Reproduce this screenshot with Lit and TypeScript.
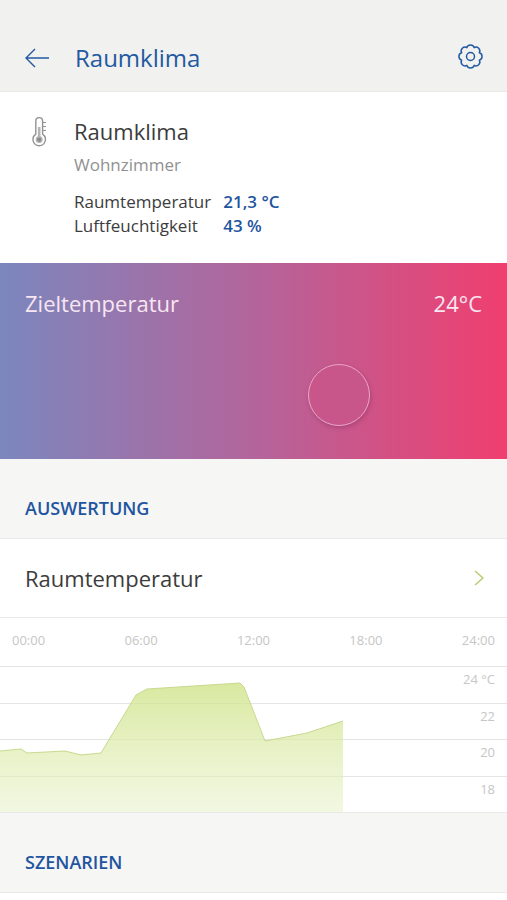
import { LitElement, html, css, svg } from "lit";
import { customElement, property, state } from "lit/decorators.js";

type Point = [number, number];

@customElement("temperature-chart")
class TemperatureChart extends LitElement {
  @property({ attribute: false }) hours: string[] = [];
  @property({ attribute: false }) levels: string[] = [];
  @property({ attribute: false }) points: Point[] = [];

  static styles = css`
    :host {
      display: block;
      font-size: 13px;
      line-height: 16px;
      color: #c6c6c6;
    }
    .hours {
      display: flex;
      justify-content: space-between;
      align-items: center;
      height: 48px;
      padding: 0 12px;
      box-sizing: border-box;
    }
    .hours span {
      padding-bottom: 4px;
    }
    .plot {
      position: relative;
      display: grid;
      grid-template-rows: repeat(4, 1fr);
      height: 146px;
    }
    .level {
      border-top: 1px solid #e4e4e4;
      padding: 4px 12px 0;
      text-align: right;
    }
    .area {
      position: absolute;
      inset: 0;
      width: 100%;
      height: 100%;
    }
  `;

  render() {
    const line = this.points.map((p) => p.join(" ")).join(" L");
    const last = this.points[this.points.length - 1];
    return html`
      <div class="hours">${this.hours.map((h) => html`<span>${h}</span>`)}</div>
      <div class="plot">
        ${this.levels.map((l) => html`<div class="level">${l}</div>`)}
        <svg class="area" viewBox="0 0 507 146" preserveAspectRatio="none" aria-hidden="true">
          <defs>
            <linearGradient id="fill" x1="0" y1="0" x2="0" y2="1">
              <stop offset="0" stop-color="#d0e48a" stop-opacity="0.82" />
              <stop offset="1" stop-color="#e6f0c4" stop-opacity="0.5" />
            </linearGradient>
          </defs>
          ${svg`
            <path d="M${line} L${last[0]} 146 L0 146 Z" fill="url(#fill)" />
            <path d="M${line}" fill="none" stroke="#c8d98f" stroke-width="1" vector-effect="non-scaling-stroke" />
          `}
        </svg>
      </div>
    `;
  }
}

@customElement("app-root")
class AppRoot extends LitElement {
  @state() private target = 24;

  private points: Point[] = [
    [0, 85], [21, 83], [27, 87], [65, 85], [81, 89], [101, 87], [136, 29],
    [147, 23], [240, 17], [244, 21], [265, 75], [307, 67], [343, 55],
  ];

  static styles = css`
    :host {
      display: block;
      min-height: 100vh;
      background: #fff;
      color: #3c3c3c;
      font-family: "Open Sans", "Noto Sans", sans-serif;
      font-size: 17px;
      line-height: 24px;
    }
    h1, h2, h3, p, dl, dd {
      margin: 0;
      font-weight: 400;
    }
    svg {
      display: block;
    }
    button {
      padding: 0;
      border: 0;
      background: none;
      font: inherit;
      color: inherit;
      text-align: left;
      cursor: pointer;
    }
    .bar {
      display: grid;
      grid-template-columns: 50px 1fr auto;
      align-items: center;
      padding: 40px 24px 15px 25px;
      background: #f1f1ef;
      border-bottom: 1px solid #e9e9e7;
      color: #2359a2;
    }
    .bar h1 {
      font-size: 24px;
      line-height: 36px;
    }
    .gear {
      padding-bottom: 4px;
    }
    .info {
      display: grid;
      grid-template-columns: 49px 1fr;
      padding: 22px 25px 25px;
    }
    .info h2 {
      font-size: 22px;
      line-height: 34px;
    }
    .room {
      line-height: 34px;
      color: #919191;
    }
    .values {
      display: grid;
      grid-template-columns: auto 1fr;
      column-gap: 12px;
      padding: 8px 0 0;
    }
    .values dd {
      font-weight: 600;
      color: #1f55a0;
    }
    .target {
      height: 196px;
      box-sizing: border-box;
      padding-top: 24px;
      background: linear-gradient(90deg, #7b87be, #b3659b 50%, #f03e6f);
      color: #f8e6f1;
      font-size: 22px;
      line-height: 32px;
    }
    .caption {
      display: flex;
      justify-content: space-between;
      padding: 0 25px 45px;
    }
    .slider {
      appearance: none;
      display: block;
      width: 100%;
      height: 62px;
      margin: 0;
      background: transparent;
      cursor: pointer;
    }
    .slider::-webkit-slider-thumb {
      appearance: none;
      box-sizing: border-box;
      width: 62px;
      height: 62px;
      border: 1px solid #eaa6c8;
      border-radius: 50%;
      background: #c9568b;
      box-shadow: 1px 2px 4px rgba(90, 20, 70, 0.25);
    }
    .section {
      padding: 37px 25px 18px;
      background: #f6f6f5;
      border-bottom: 1px solid #e9e9e9;
      color: #1f55a0;
      font-size: 18px;
      font-weight: 600;
      line-height: 24px;
    }
    .row {
      display: flex;
      justify-content: space-between;
      align-items: center;
      width: 100%;
      height: 79px;
      padding: 0 23px 0 25px;
      border-bottom: 1px solid #e9e9e9;
      font-size: 22px;
    }
    .evaluation + .section {
      border-top: 1px solid #e9e9e9;
    }
  `;

  private onInput(e: Event) {
    this.target = Number((e.target as HTMLInputElement).value);
  }

  render() {
    return html`
      <header class="bar">
        <button aria-label="Zurück">
          <svg width="24" height="20" viewBox="0 0 24 20" fill="none" stroke="currentColor" stroke-width="1.4">
            <path d="M10 1 L1 10 L10 19 M1 10 H24" />
          </svg>
        </button>
        <h1>Raumklima</h1>
        <button class="gear" aria-label="Einstellungen">
          <svg width="25" height="25" viewBox="-12.5 -12.5 25 25" fill="none" stroke="currentColor" stroke-width="1.5" stroke-linejoin="round">
            <path d="M8.87 -3.67 A3.85 3.85 0 0 1 8.87 3.67 A3.85 3.85 0 0 1 3.67 8.87 A3.85 3.85 0 0 1 -3.67 8.87 A3.85 3.85 0 0 1 -8.87 3.67 A3.85 3.85 0 0 1 -8.87 -3.67 A3.85 3.85 0 0 1 -3.67 -8.87 A3.85 3.85 0 0 1 3.67 -8.87 A3.85 3.85 0 0 1 8.87 -3.67 Z" />
            <circle r="4" />
          </svg>
        </button>
      </header>

      <section class="info">
        <svg width="24" height="34" viewBox="0 0 24 34" fill="none" stroke="#929292" stroke-width="1.4">
          <path d="M10.8 20.2 V7 A3.4 3.4 0 0 1 17.6 7 V20.2 A6.3 6.3 0 1 1 10.8 20.2 Z" />
          <path d="M17.6 8.5 H21 M17.6 12.5 H21 M17.6 16.5 H21" stroke-width="1.1" />
          <path d="M14.2 13 V25" stroke="#b5b5b5" stroke-width="2.6" />
          <circle cx="14.2" cy="25.6" r="2.8" fill="#8b8b8b" stroke="#b5b5b5" />
        </svg>
        <div>
          <h2>Raumklima</h2>
          <p class="room">Wohnzimmer</p>
          <dl class="values">
            <dt>Raumtemperatur</dt>
            <dd>21,3 °C</dd>
            <dt>Luftfeuchtigkeit</dt>
            <dd>43 %</dd>
          </dl>
        </div>
      </section>

      <section class="target">
        <div class="caption">
          <label for="target">Zieltemperatur</label>
          <output for="target">${this.target}°C</output>
        </div>
        <input class="slider" id="target" type="range" min="15" max="28" .value=${String(this.target)} @input=${this.onInput} />
      </section>

      <h2 class="section">AUSWERTUNG</h2>
      <section class="evaluation">
        <button class="row">
          <span>Raumtemperatur</span>
          <svg width="10" height="16" viewBox="0 0 10 16" fill="none" stroke="#b3cb6a" stroke-width="1.3" aria-hidden="true">
            <path d="M1 1 L9 8 L1 15" />
          </svg>
        </button>
        <temperature-chart
          .hours=${["00:00", "06:00", "12:00", "18:00", "24:00"]}
          .levels=${["24 °C", "22", "20", "18"]}
          .points=${this.points}
        ></temperature-chart>
      </section>
      <h2 class="section">SZENARIEN</h2>
    `;
  }
}
